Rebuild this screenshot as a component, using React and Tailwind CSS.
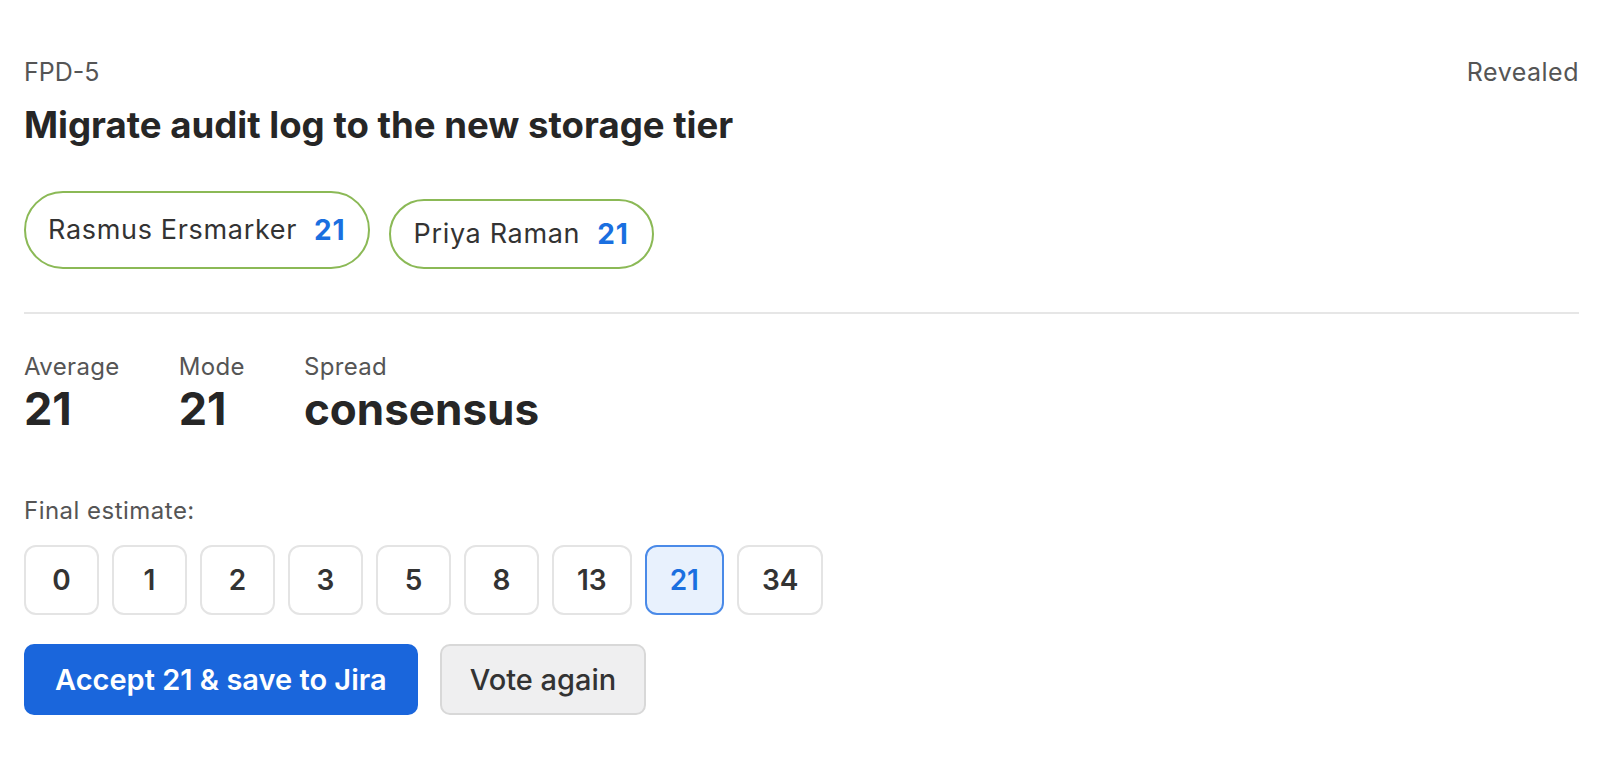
import React from "react";

const values = ["0", "1", "2", "3", "5", "8", "13", "21", "34"];

export default function App() {
  return (
    <div
      className="min-h-[783px] w-full bg-white pl-[24px] pr-[21px] pt-[57px] text-[#222]"
      style={{ fontFamily: 'Inter, "Liberation Sans", Arial, sans-serif' }}
    >
      <div className="flex items-start justify-between">
        <div className="text-[25px] leading-[30px] text-[#555]">FPD-5</div>
        <div className="text-[25px] leading-[30px] tracking-[0.02em] text-[#555]">Revealed</div>
      </div>
      <h1 className="mt-[16px] text-[36.6px] font-bold leading-[44px] text-[#262626]">
        Migrate audit log to the new storage tier
      </h1>

      <div className="mt-[44px] flex items-end gap-[19px]">
        <div className="flex h-[78px] items-center rounded-full border-2 border-[#8bb956] pl-[22px] pr-[23px]">
          <span className="text-[27px] tracking-[0.025em] text-[#333]">Rasmus Ersmarker</span>
          <span className="ml-[17px] text-[28px] font-bold tracking-[0.03em] text-[#1a6fe0]">21</span>
        </div>
        <div className="flex h-[70px] items-center rounded-full border-2 border-[#8bb956] pl-[22px] pr-[23px]">
          <span className="text-[27px] tracking-[0.025em] text-[#333]">Priya Raman</span>
          <span className="ml-[17px] text-[28px] font-bold tracking-[0.03em] text-[#1a6fe0]">21</span>
        </div>
      </div>

      <div className="mt-[43px] border-t-2 border-[#e6e6e6]" />

      <div className="mt-[39px] flex gap-[59px]">
        <div>
          <div className="text-[24px] leading-[28px] tracking-[0.015em] text-[#555]">Average</div>
          <div className="mt-[2px] text-[45px] font-bold leading-[52px] text-[#262626]">21</div>
        </div>
        <div>
          <div className="text-[24px] leading-[28px] tracking-[0.015em] text-[#555]">Mode</div>
          <div className="mt-[2px] text-[45px] font-bold leading-[52px] text-[#262626]">21</div>
        </div>
        <div>
          <div className="text-[24px] leading-[28px] tracking-[0.015em] text-[#555]">Spread</div>
          <div className="mt-[2px] text-[44px] font-bold leading-[52px] text-[#262626]">consensus</div>
        </div>
      </div>

      <div className="mt-[62px] text-[24px] leading-[28px] tracking-[0.02em] text-[#555]">Final estimate:</div>

      <div className="mt-[20px] flex gap-[13px]">
        {values.map((v) => (
          <button
            key={v}
            className={
              v === "21"
                ? "flex h-[70px] min-w-[75px] items-center justify-center rounded-[12px] border-2 border-[#4a8ae8] bg-[#e8f1fd] px-[23px] text-[28px] font-semibold text-[#1a6fe0]"
                : "flex h-[70px] min-w-[75px] items-center justify-center rounded-[12px] border-2 border-[#e4e4e4] bg-white px-[23px] text-[28px] font-semibold text-[#333]"
            }
          >
            {v}
          </button>
        ))}
      </div>

      <div className="mt-[29px] flex gap-[22px]">
        <button className="h-[71px] rounded-[10px] bg-[#1a66dc] px-[31px] text-[29px] font-semibold text-white">
          Accept 21 &amp; save to Jira
        </button>
        <button className="h-[71px] rounded-[10px] border-2 border-[#d8d8d8] bg-[#efeff0] px-[28px] text-[29px] font-medium text-[#333]">
          Vote again
        </button>
      </div>
    </div>
  );
}
